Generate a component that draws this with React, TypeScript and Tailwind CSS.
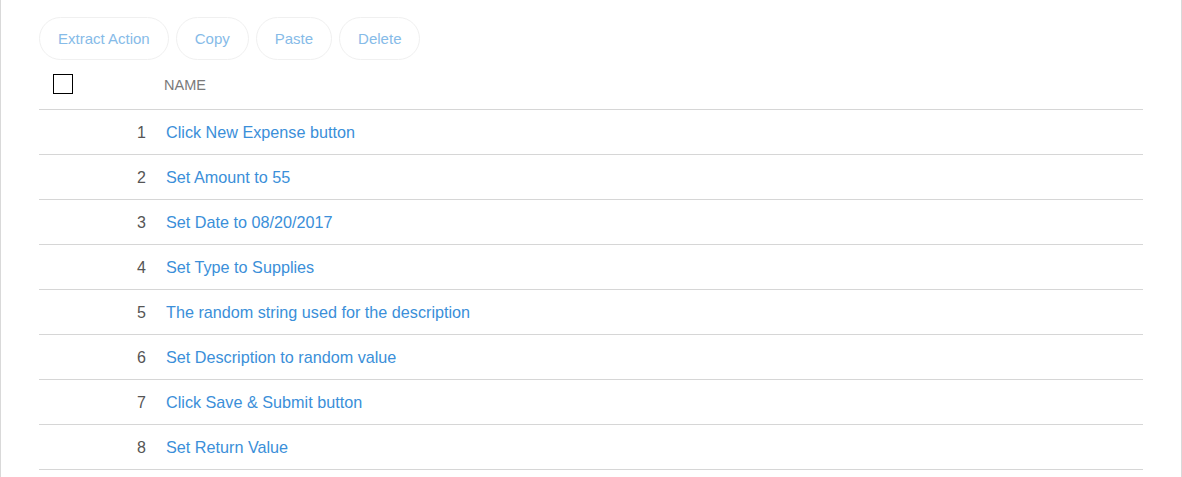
const STEPS = [
  "Click New Expense button",
  "Set Amount to 55",
  "Set Date to 08/20/2017",
  "Set Type to Supplies",
  "The random string used for the description",
  "Set Description to random value",
  "Click Save & Submit button",
  "Set Return Value",
];

const ACTIONS = ["Extract Action", "Copy", "Paste", "Delete"];

export default function App() {
  return (
    <div className="min-h-screen border-x border-[#d9d9d9] bg-white pl-[38px] pr-[38px] pt-[17px] font-['Liberation_Sans',Arial,sans-serif]">
      <div className="flex gap-[7px]">
        {ACTIONS.map((a) => (
          <button
            key={a}
            className="h-[43px] rounded-full border border-[#f0f0f0] px-[18px] pt-[1px] text-[15px] text-[#86bbe8]"
          >
            {a}
          </button>
        ))}
      </div>
      <table className="w-full border-collapse">
        <thead>
          <tr className="h-[49px] border-b border-[#d6d6d6]">
            <th className="w-[115px] pl-[14px] text-left align-middle">
              <span className="block h-[20px] w-[20px] border-[1.5px] border-black" />
            </th>
            <th className="pl-[10px] pt-[3px] text-left text-[14.5px] font-normal text-[#7a7a7a]">NAME</th>
          </tr>
        </thead>
        <tbody>
          {STEPS.map((s, i) => (
            <tr key={i} className="h-[45px] border-b border-[#d6d6d6]">
              <td className="pr-[8px] pt-[2px] text-right text-[16px] text-[#555]">{i + 1}</td>
              <td className="pl-[12px] pt-[2px] text-[16.2px] text-[#3b8fd9]">{s}</td>
            </tr>
          ))}
        </tbody>
      </table>
    </div>
  );
}
